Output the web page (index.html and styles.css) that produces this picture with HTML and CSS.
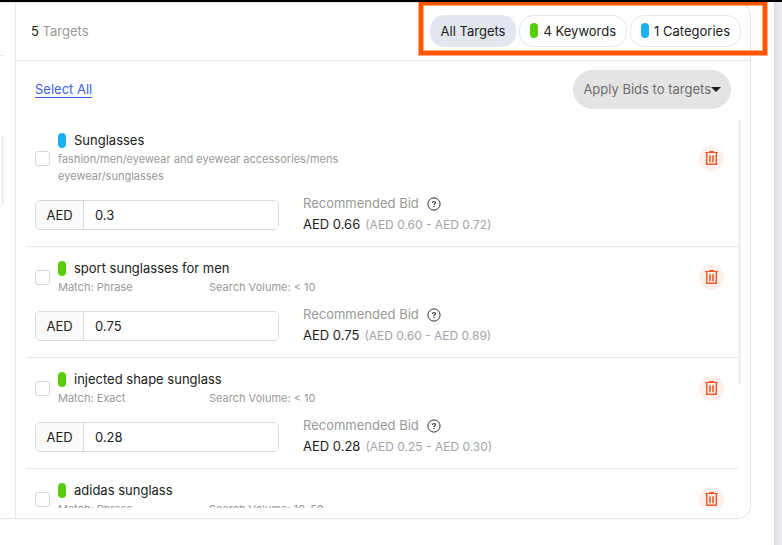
FILE: index.html
```html
<!DOCTYPE html>
<html lang="en">
<head>
<meta charset="utf-8">
<meta name="viewport" content="width=device-width, initial-scale=1">
<title>Targets</title>
<link rel="stylesheet" href="styles.css">
</head>
<body>
<svg class="defs" aria-hidden="true">
  <symbol id="trash" viewBox="0 0 13 15">
    <path d="M0 1.5h13M4 .5h5" fill="none" stroke="currentColor" stroke-width="1.2"/>
    <path d="M1.7 2v11.3h9.6V2" fill="none" stroke="currentColor" stroke-width="1.5"/>
    <path d="M5 4.2v7M8 4.2v7" fill="none" stroke="currentColor" stroke-width="1.6"/>
  </symbol>
  <symbol id="help" viewBox="0 0 14 14">
    <circle cx="7" cy="7" r="6.1" fill="none" stroke="currentColor" stroke-width="1"/>
    <path d="M5.500 5.900C5.500 5 6.100 4.500 7 4.500s1.500.5 1.500 1.300C8.500 6.800 7 6.800 7 8" fill="none" stroke="currentColor" stroke-width="1.1"/>
    <circle cx="7" cy="9.500" r=".7" fill="currentColor"/>
  </symbol>
</svg>
<div class="page">
  <main class="dialog">
    <div class="panel">
      <div class="side"><div class="side-head"></div><div class="side-thumb"></div></div>
      <section class="targets">
        <header class="head">
          <div class="count"><b>5</b> Targets</div>
          <div class="filters">
            <button class="pill active" type="button">All Targets</button>
            <button class="pill" type="button"><i class="tag green"></i>4 Keywords</button>
            <button class="pill" type="button"><i class="tag blue"></i>1 Categories</button>
          </div>
        </header>
        <div class="tools">
          <a class="select-all" href="#list">Select All</a>
          <button class="apply" type="button">Apply Bids to targets<i class="caret"></i></button>
        </div>
        <div class="scroller">
          <ul class="list" id="list">
            <li class="row">
              <div class="info">
                <input class="check" type="checkbox" id="t1">
                <div class="text">
                  <label class="name" for="t1"><i class="tag blue"></i>Sunglasses</label>
                  <div class="path">fashion/men/eyewear and eyewear accessories/mens eyewear/sunglasses</div>
                </div>
                <button class="delete" type="button" aria-label="Delete"><svg><use href="#trash"/></svg></button>
              </div>
              <div class="bid">
                <div class="field"><label for="b1">AED</label><input id="b1" type="text" value="0.3"></div>
                <div class="rec"><div class="rec-title">Recommended Bid<svg><use href="#help"/></svg></div><div class="rec-value"><b>AED 0.66</b><span>(AED 0.60 - AED 0.72)</span></div></div>
              </div>
            </li>
            <li class="row">
              <div class="info">
                <input class="check" type="checkbox" id="t2">
                <div class="text">
                  <label class="name" for="t2"><i class="tag green"></i>sport sunglasses for men</label>
                  <div class="meta"><span>Match: Phrase</span><span>Search Volume: &lt; 10</span></div>
                </div>
                <button class="delete" type="button" aria-label="Delete"><svg><use href="#trash"/></svg></button>
              </div>
              <div class="bid">
                <div class="field"><label for="b2">AED</label><input id="b2" type="text" value="0.75"></div>
                <div class="rec"><div class="rec-title">Recommended Bid<svg><use href="#help"/></svg></div><div class="rec-value"><b>AED 0.75</b><span>(AED 0.60 - AED 0.89)</span></div></div>
              </div>
            </li>
            <li class="row">
              <div class="info">
                <input class="check" type="checkbox" id="t3">
                <div class="text">
                  <label class="name" for="t3"><i class="tag green"></i>injected shape sunglass</label>
                  <div class="meta"><span>Match: Exact</span><span>Search Volume: &lt; 10</span></div>
                </div>
                <button class="delete" type="button" aria-label="Delete"><svg><use href="#trash"/></svg></button>
              </div>
              <div class="bid">
                <div class="field"><label for="b3">AED</label><input id="b3" type="text" value="0.28"></div>
                <div class="rec"><div class="rec-title">Recommended Bid<svg><use href="#help"/></svg></div><div class="rec-value"><b>AED 0.28</b><span>(AED 0.25 - AED 0.30)</span></div></div>
              </div>
            </li>
            <li class="row">
              <div class="info">
                <input class="check" type="checkbox" id="t4">
                <div class="text">
                  <label class="name" for="t4"><i class="tag green"></i>adidas sunglass</label>
                  <div class="meta"><span>Match: Phrase</span><span>Search Volume: 10-50</span></div>
                </div>
                <button class="delete" type="button" aria-label="Delete"><svg><use href="#trash"/></svg></button>
              </div>
            </li>
          </ul>
          <div class="track"><div class="thumb"></div></div>
        </div>
      </section>
    </div>
  </main>
  <div class="backdrop"></div>
  <div class="highlight"></div>
</div>
</body>
</html>
```

FILE: styles.css
```css
* { box-sizing: border-box; }
body {
  margin: 0;
  font-family: Inter, "Liberation Sans", sans-serif;
  font-size: 13px;
  color: #212121;
  background: #fff;
}
b { font-weight: 400; color: #1c1c1c; }
button, input { font: inherit; color: inherit; }
button { cursor: pointer; }
.defs { display: none; }

.page {
  position: relative;
  display: flex;
  height: 100vh;
  border-top: 2px solid #000;
  overflow: hidden;
}
.dialog { flex: 1; min-width: 0; display: flex; padding: 0 23px 26px 0; }
.backdrop {
  width: 8px;
  background: linear-gradient(90deg, #dcdde2, #e8e9ef 5px);
}
.panel {
  flex: 1;
  min-width: 0;
  display: flex;
  border: 1px solid #e2e4ee;
  border-left: 0;
  border-radius: 0 14px 14px 0;
}
.side { width: 16px; border-right: 1px solid #e2e4ee; }
.side-head { width: 4px; height: 53px; border-bottom: 1px solid #e6e6e6; }
.side-thumb { width: 3px; height: 70px; margin: 79px 0 0 1px; background: #f1f1f1; border-radius: 2px; }

.targets { flex: 1; min-width: 0; display: flex; flex-direction: column; padding-bottom: 10px; }
.head {
  display: flex;
  align-items: center;
  justify-content: space-between;
  height: 58px;
  padding: 0 9px 2px 15px;
  border-bottom: 1px solid #e2e4ee;
}
.count { color: #999; }
.filters { display: flex; gap: 3px; }
.pill {
  display: flex;
  align-items: center;
  height: 32px;
  padding: 0 10px;
  border: 1px solid #e2e6f0;
  border-radius: 14px;
  background: #fff;
}
.pill .tag { margin-right: 5px; }
.pill.active { background: #e2e6ef; }
.tag { flex: none; width: 8px; height: 15px; border-radius: 4px; }
.green { background: #58cc0a; }
.blue { background: #1cb0f6; }

.tools {
  display: flex;
  align-items: center;
  justify-content: space-between;
  height: 58px;
  padding: 0 19px 2px;
}
.select-all {
  color: #3c61dd;
  line-height: 16px;
  text-decoration: none;
  border-bottom: 1px solid #3c61dd;
}
.apply {
  display: flex;
  align-items: center;
  height: 39px;
  padding: 0 9px;
  border: 1px solid #e0e3ea;
  border-radius: 20px;
  background: #e4e4e4;
  color: #6c6c6c;
}
.caret { border: 5px solid transparent; border-top-color: #1c1c1c; border-bottom: 0; }

.scroller { flex: 1; min-height: 0; display: flex; padding: 0 9px 0 10px; overflow: hidden; }
.list { flex: 1; min-width: 0; margin: 0; padding: 0; list-style: none; }
.track { width: 3px; }
.thumb { height: 265px; border-radius: 2px; background: #f0f0f0; }
.row { padding: 12px 14px 11px 9px; border-bottom: 1px solid #e2e4ee; }
.info { display: flex; align-items: center; }
.check {
  flex: none;
  appearance: none;
  width: 15px;
  height: 15px;
  margin: 0 8px 0 0;
  border: 1px solid #d6d6d6;
  border-radius: 3px;
  background: #fff;
}
.text { width: 300px; margin-right: auto; }
.name { display: flex; align-items: center; gap: 8px; line-height: 19px; }
.path, .meta { padding-top: 1px; font-size: 11px; line-height: 17px; color: #999; }
.meta { display: grid; grid-template-columns: 151px 1fr; }
.delete {
  display: grid;
  place-items: center;
  width: 25px;
  height: 25px;
  padding: 0;
  border: 0;
  border-radius: 50%;
  background: #feefea;
  color: #f4592b;
}
.delete svg { width: 13px; height: 15px; }

.bid { display: flex; gap: 24px; margin-top: 8px; }
.field {
  display: flex;
  width: 244px;
  height: 30px;
  margin-top: 7px;
  border: 1px solid #d9d9d9;
  border-radius: 5px;
  overflow: hidden;
  line-height: 28px;
}
.field label { width: 48px; text-align: center; background: #fafafa; border-right: 1px solid #d9d9d9; }
.field input { flex: 1; min-width: 0; padding: 0 11px; border: 0; background: #fff; outline: 0; }
.rec { line-height: 21px; }
.rec-title { display: flex; align-items: center; gap: 8px; color: #999; }
.rec-title svg { width: 14px; height: 14px; color: #333; }
.rec-value { display: flex; gap: 5px; }
.rec-value span { font-size: 12px; color: #a3a3aa; }

.highlight {
  position: absolute;
  top: -1px;
  right: 15px;
  width: 348px;
  height: 54px;
  border: 4px solid #ff5500;
  box-shadow: 0 0 0 1px rgba(255, 85, 0, .5), inset 0 0 0 1px rgba(255, 85, 0, .5);
  pointer-events: none;
}
```
